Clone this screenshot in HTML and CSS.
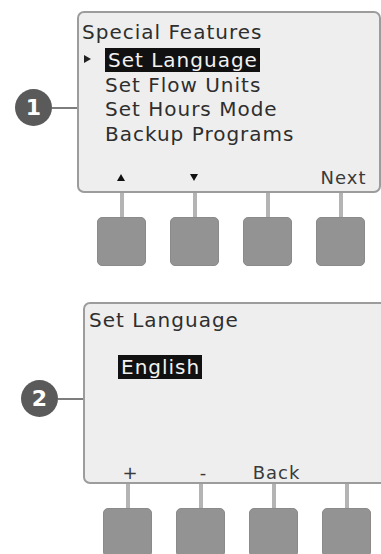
FILE: index.html
```html
<!DOCTYPE html>
<html lang="en">
<head>
  <meta charset="UTF-8" />
  <title>Special Features</title>
  <link rel="stylesheet" href="styles.css">
</head>
<body>
  <section class="step step-one">
    <div class="callout"><span class="num">1</span><span class="leader"></span></div>
    <div class="screen">
      <div class="title">Special Features</div>
      <ul class="menu">
        <li class="current"><span class="pointer"></span><span class="hl">Set Language</span></li>
        <li>Set Flow Units</li>
        <li>Set Hours Mode</li>
        <li>Backup Programs</li>
      </ul>
      <div class="softkeys">
        <span class="soft"><span class="tri up"></span></span>
        <span class="soft"><span class="tri down"></span></span>
        <span class="soft"></span>
        <span class="soft">Next</span>
      </div>
    </div>
    <div class="keys">
      <div class="key"><span class="stem"></span><span class="cap"></span></div>
      <div class="key"><span class="stem"></span><span class="cap"></span></div>
      <div class="key"><span class="stem"></span><span class="cap"></span></div>
      <div class="key"><span class="stem"></span><span class="cap"></span></div>
    </div>
  </section>

  <section class="step step-two">
    <div class="callout"><span class="num">2</span><span class="leader"></span></div>
    <div class="screen">
      <div class="title">Set Language</div>
      <div class="value"><span class="hl">English</span></div>
      <div class="softkeys">
        <span class="soft">+</span>
        <span class="soft">-</span>
        <span class="soft">Back</span>
        <span class="soft"></span>
      </div>
    </div>
    <div class="keys">
      <div class="key"><span class="stem"></span><span class="cap"></span></div>
      <div class="key"><span class="stem"></span><span class="cap"></span></div>
      <div class="key"><span class="stem"></span><span class="cap"></span></div>
      <div class="key"><span class="stem"></span><span class="cap"></span></div>
    </div>
  </section>
</body>
</html>
```

FILE: styles.css
```css
body {
  margin: 0;
  width: 381px;
  height: 554px;
  overflow: hidden;
  background: #fff;
  font-family: "DejaVu Sans", Verdana, sans-serif;
  color: #2e2e2e;
}

.step {
  display: grid;
  grid-template-columns: 62px 304px;
}
.step-one {
  padding: 11px 0 0 15px;
}
.step-two {
  margin-top: 36px;
  padding-left: 21px;
}

/* numbered callout */
.callout {
  display: flex;
  align-items: center;
  align-self: center;
  margin-top: 11px;
}
.num {
  width: 37px;
  height: 37px;
  border-radius: 50%;
  background: #5a5a5a;
  color: #fff;
  font-weight: bold;
  font-size: 22px;
  line-height: 37px;
  text-align: center;
  flex: none;
}
.leader {
  flex: 1;
  height: 2px;
  background: #7d7d7d;
}

/* lcd screen */
.screen {
  box-sizing: border-box;
  height: 182px;
  border: 2px solid #9c9c9c;
  border-radius: 7px;
  background: #eeeeee;
  padding: 7px 0 0 3px;
  display: flex;
  flex-direction: column;
  font-size: 20px;
  letter-spacing: 1px;
}
.step-two .screen {
  padding: 4px 0 0 4px;
}
.title {
  line-height: 24px;
}
.menu {
  list-style: none;
  margin: 4px 0 0;
  padding: 0 0 0 23px;
}
.menu li {
  line-height: 24.5px;
  position: relative;
}
.hl {
  background: #111;
  color: #f2f2f2;
  padding: 0 2px 0 3px;
}
.pointer {
  position: absolute;
  left: -21px;
  top: 7px;
  border-left: 7px solid #222;
  border-top: 4px solid transparent;
  border-bottom: 4px solid transparent;
}
.value {
  margin-top: 23px;
  padding-left: 29px;
  line-height: 24px;
}

.softkeys {
  margin-top: auto;
  display: flex;
  padding-left: 6px;
  font-size: 18px;
  color: #3a3a3a;
  line-height: 22px;
  height: 24px;
}
.step-two .softkeys {
  padding-left: 5px;
  height: 20px;
}
.soft {
  width: 73px;
  text-align: center;
  flex: none;
}
.tri {
  display: inline-block;
  vertical-align: middle;
  border-left: 4px solid transparent;
  border-right: 4px solid transparent;
  margin-right: 8px;
}
.tri.up {
  border-bottom: 7px solid #111;
  margin-bottom: 4px;
}
.tri.down {
  border-top: 7px solid #111;
  margin-bottom: 4px;
}

/* hardware buttons */
.keys {
  grid-column: 2;
  display: flex;
  padding-left: 8px;
}
.key {
  width: 73px;
  display: flex;
  flex-direction: column;
  align-items: center;
  flex: none;
}
.stem {
  width: 4px;
  height: 24px;
  background: #b4b4b4;
}
.cap {
  box-sizing: border-box;
  width: 49px;
  height: 49px;
  border-radius: 5px;
  background: #939393;
  border: 1px solid #8a8a8a;
}
```
